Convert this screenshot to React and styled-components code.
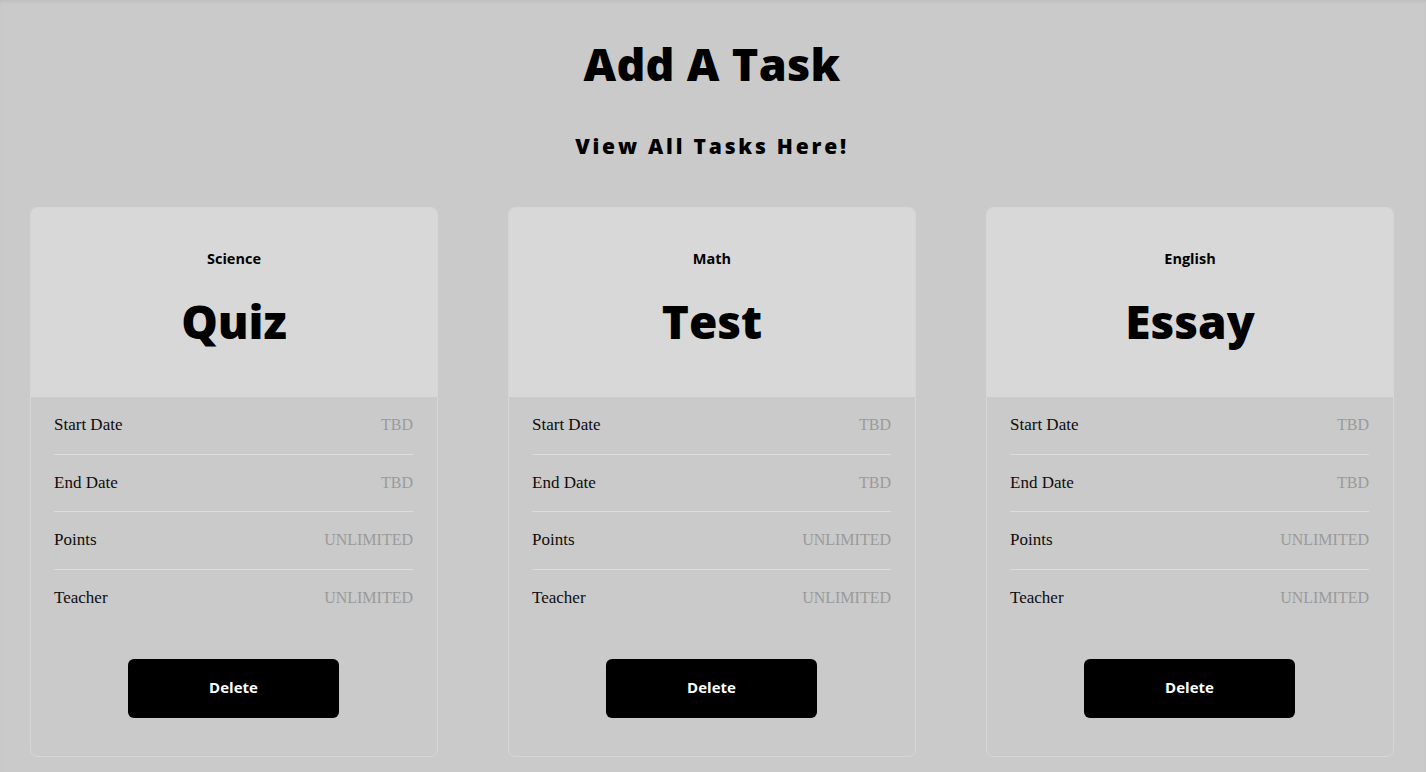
import React from "react";
import styled, { createGlobalStyle } from "styled-components";

const Global = createGlobalStyle`
  html, body { margin: 0; padding: 0; background: #cacaca; }
  body { font-family: "Open Sans", "Liberation Sans", sans-serif; }
  * { box-sizing: border-box; }
`;

const Page = styled.main`
  min-height: 772px;
  background: #cacaca;
  box-shadow: inset 0 3px 4px -2px rgba(0,0,0,0.08);
  padding: 34px 32px 0 30px;
`;

const Title = styled.h1`
  margin: 0;
  text-align: center;
  font-family: "Open Sans", sans-serif;
  font-weight: 800;
  font-size: 45px;
  line-height: 60px;
  color: #000;
  letter-spacing: 0.3px;
`;

const Subtitle = styled.h2`
  margin: 35px 0 0;
  text-align: center;
  font-family: "Open Sans", sans-serif;
  font-weight: 800;
  font-size: 21px;
  line-height: 34px;
  letter-spacing: 2.8px;
  color: #000;
`;

const Grid = styled.section`
  margin-top: 44px;
  display: grid;
  grid-template-columns: repeat(3, 408px);
  justify-content: space-between;
`;

const Card = styled.article`
  border: 1px solid #d6d6d6;
  border-radius: 7px;
  overflow: hidden;
  display: flex;
  flex-direction: column;
  height: 550px;
`;

const Header = styled.header`
  background: #d8d8d8;
  height: 189px;
  display: flex;
  flex-direction: column;
  align-items: center;
  padding-top: 41px;
`;

const Subject = styled.div`
  font-family: "Open Sans", sans-serif;
  font-weight: 700;
  font-size: 14.5px;
  line-height: 20px;
  color: #000;
`;

const Kind = styled.div`
  margin-top: 28px;
  font-family: "Open Sans", sans-serif;
  font-weight: 800;
  font-size: 46px;
  line-height: 48px;
  color: #000;
`;

const Body = styled.div`
  padding: 0 24px 0 23px;
  display: flex;
  flex-direction: column;
  align-items: stretch;
`;

const Row = styled.div`
  height: 57.5px;
  display: flex;
  align-items: center;
  justify-content: space-between;
  border-bottom: 1px solid ${p => (p.$last ? "transparent" : "#dcdcdc")};
  font-family: "Liberation Serif", "DejaVu Serif", serif;
  font-size: 17px;
`;

const Label = styled.span`
  color: #0d0d0d;
`;

const Value = styled.span`
  color: #9a9a9a;
  font-size: 16px;
`;

const Button = styled.button`
  align-self: center;
  margin-top: 32px;
  width: 211px;
  height: 59px;
  padding: 0 0 4px;
  border: none;
  border-radius: 6px;
  background: #000;
  color: #fff;
  font-family: "Open Sans", sans-serif;
  font-weight: 700;
  font-size: 15px;
  cursor: pointer;
`;

const tasks = [
  { subject: "Science", kind: "Quiz" },
  { subject: "Math", kind: "Test" },
  { subject: "English", kind: "Essay" },
];

const rows = [
  ["Start Date", "TBD"],
  ["End Date", "TBD"],
  ["Points", "UNLIMITED"],
  ["Teacher", "UNLIMITED"],
];

export default function App() {
  return (
    <>
      <Global />
      <Page>
        <Title>Add A Task</Title>
        <Subtitle>View All Tasks Here!</Subtitle>
        <Grid>
          {tasks.map(t => (
            <Card key={t.kind}>
              <Header>
                <Subject>{t.subject}</Subject>
                <Kind>{t.kind}</Kind>
              </Header>
              <Body>
                {rows.map(([l, v], i) => (
                  <Row key={l} $last={i === rows.length - 1}>
                    <Label>{l}</Label>
                    <Value>{v}</Value>
                  </Row>
                ))}
                <Button>Delete</Button>
              </Body>
            </Card>
          ))}
        </Grid>
      </Page>
    </>
  );
}
